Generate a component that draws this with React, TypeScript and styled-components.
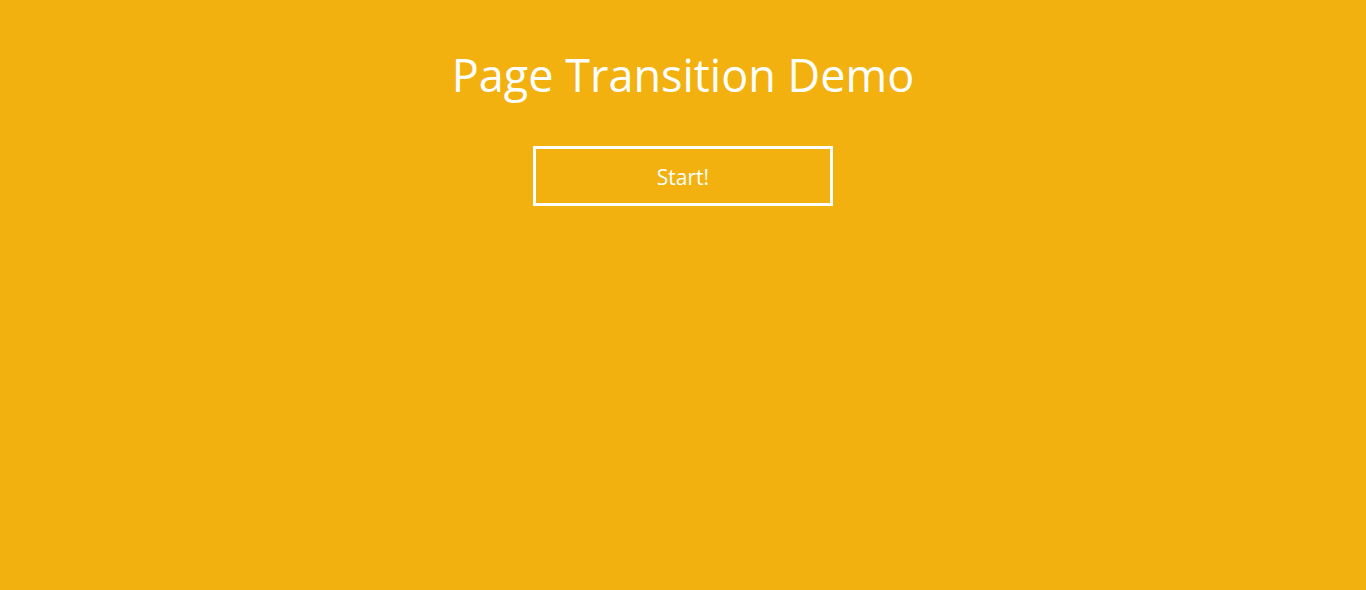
import styled, { createGlobalStyle } from "styled-components";

const GlobalStyle = createGlobalStyle`
  html, body {
    margin: 0;
    padding: 0;
    height: 100%;
    background-color: #f2b10e;
  }
  #root {
    min-height: 100%;
  }
`;

const Page = styled.main`
  min-height: 100vh;
  display: flex;
  flex-direction: column;
  align-items: center;
  padding-top: 44px;
  box-sizing: border-box;
  background-color: #f2b10e;
  color: #fff;
  font-family: "Open Sans", "Noto Sans", sans-serif;
`;

const Title = styled.h1`
  margin: 0;
  font-size: 45px;
  font-weight: 400;
  line-height: 62px;
`;

const StartButton = styled.button`
  margin-top: 40px;
  width: 300px;
  height: 60px;
  padding-top: 2px;
  border: 3px solid #fff;
  background: transparent;
  color: #fff;
  font-family: inherit;
  font-size: 21px;
  font-weight: 400;
  cursor: pointer;
`;

function App() {
  return (
    <>
      <GlobalStyle />
      <Page>
        <Title>Page Transition Demo</Title>
        <StartButton>Start!</StartButton>
      </Page>
    </>
  );
}

export default App;
